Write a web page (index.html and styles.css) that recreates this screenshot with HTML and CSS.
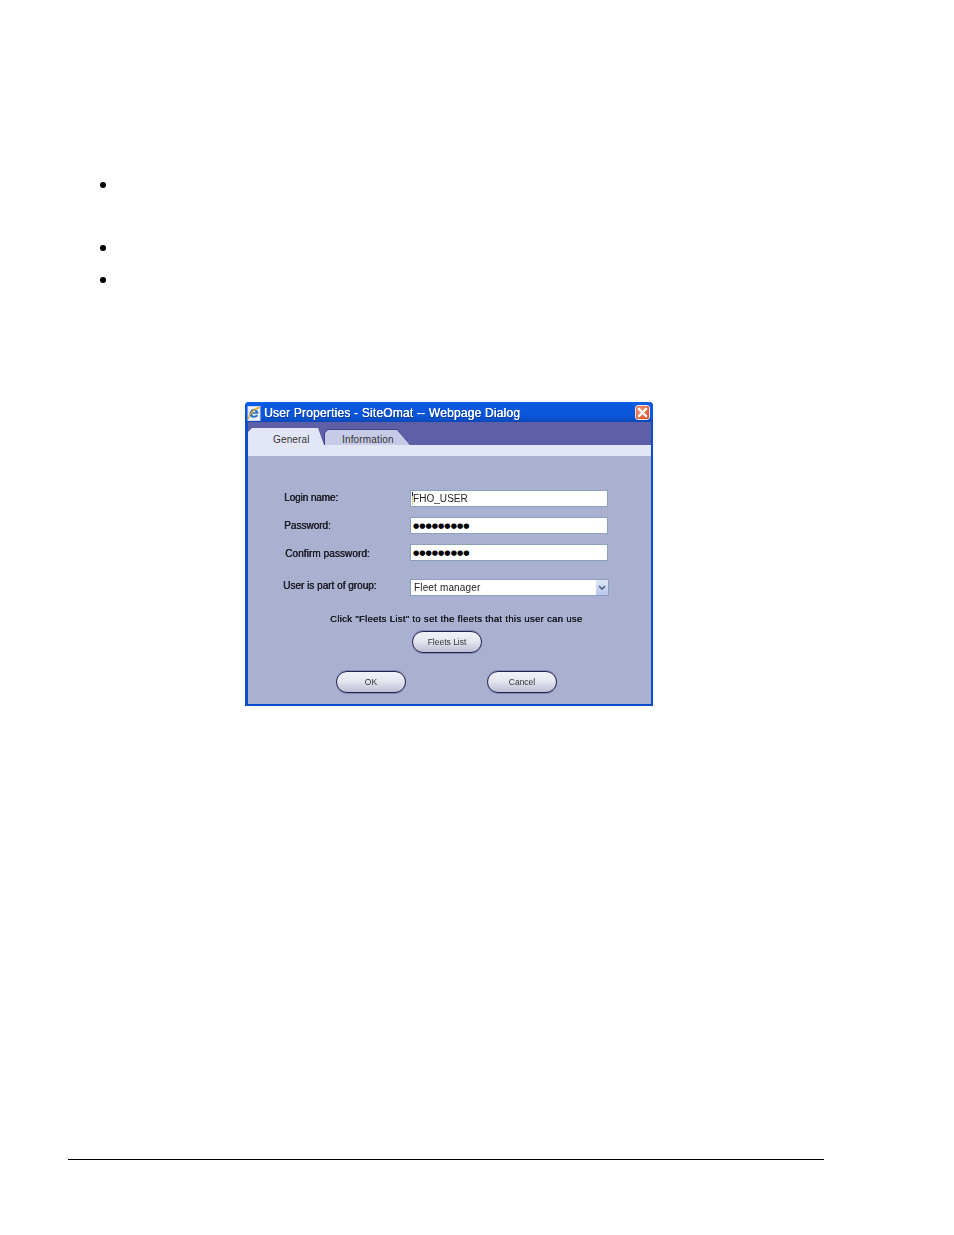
FILE: index.html
```html
<!DOCTYPE html>
<html lang="en">
<head>
<meta charset="utf-8">
<title>User Properties - SiteOmat</title>
<link rel="stylesheet" href="styles.css">
</head>
<body>
<div class="page">
  <ul class="bullets">
    <li class="b1"></li>
    <li class="b2"></li>
    <li class="b3"></li>
  </ul>
  <div class="dialog">
    <div class="titlebar">
      <svg class="ie" width="14" height="15" viewBox="0 0 14 15">
        <rect x="1" y="0.500" width="12" height="14" fill="#eef2fa" stroke="#cfd8ea"/>
        <path d="M2.500 8.500c0-3.500 2.300-5.400 4.600-5.400 2.600 0 4.200 1.900 4.200 4.600H5c.1 2.200 3 2.800 5 .9l1 1.500c-2.900 2.600-8.500 1.900-8.500-1.600zM5.100 6.200h3.600c-.1-1.900-3.300-2-3.600 0z" fill="#2a6fc4"/>
        <path d="M1.500 13C2 8 7 2.500 12.500 1.500" fill="none" stroke="#e8a820" stroke-width="1.300"/>
      </svg>
      <span class="title">User Properties - SiteOmat -- Webpage Dialog</span>
      <span class="close">
        <svg width="11" height="11" viewBox="0 0 11 11"><path d="M2 2l7 7M9 2l-7 7" stroke="#fff" stroke-width="2.300" stroke-linecap="square"/></svg>
      </span>
    </div>
    <div class="content">
      <div class="tabstrip">
        <div class="tab tab-active">General</div>
        <div class="tab tab-idle">Information</div>
      </div>
      <div class="band"></div>
      <div class="formarea">
        <div class="fields">
          <label class="lbl l1">Login name:</label>
          <div class="input text"><i class="caret"></i>FHO_USER</div>
          <label class="lbl l2">Password:</label>
          <div class="input dots">●●●●●●●●●</div>
          <label class="lbl l3">Confirm password:</label>
          <div class="input dots">●●●●●●●●●</div>
          <label class="lbl l4">User is part of group:</label>
          <div class="input select"><span>Fleet manager</span>
            <span class="arrow"><svg width="8" height="6" viewBox="0 0 8 6"><path d="M1 1l3 3 3-3" fill="none" stroke="#4d6185" stroke-width="1.600"/></svg></span>
          </div>
        </div>
        <p class="hint">Click "Fleets List" to set the fleets that this user can use</p>
        <div class="btnrow single"><button class="btn">Fleets List</button></div>
        <div class="btnrow double"><button class="btn">OK</button><button class="btn">Cancel</button></div>
      </div>
    </div>
  </div>
  <div class="rule"></div>
</div>
</body>
</html>
```
FILE: styles.css
```css
html, body { margin: 0; padding: 0; background: #fff; }
.page { width: 954px; height: 1235px; padding-top: 182px; box-sizing: border-box; font-family: "Liberation Sans", Arial, sans-serif; overflow: hidden; }

.bullets { list-style: none; margin: 0 0 0 100px; padding: 0; height: 220px; }
.bullets li { width: 6px; height: 6px; border-radius: 50%; background: #000; }
.b1 { margin-bottom: 57px; }
.b2 { margin-bottom: 26px; }

.dialog { width: 408px; height: 304px; margin-left: 245px; box-sizing: border-box; display: flex; flex-direction: column; background: #0a4ecb; border-radius: 4px 4px 0 0; }
.titlebar { height: 20px; flex: none; display: flex; align-items: center; padding: 2px 3px 0 2px; box-sizing: border-box; background: linear-gradient(#0d5fe6, #0a58e0 20%, #0a55d8 70%, #0b49b8); border-radius: 4px 4px 0 0; }
.ie { flex: none; margin-right: 3px; }
.title { flex: 1; color: #fff; font-size: 12px; letter-spacing: 0.2px; white-space: nowrap; text-shadow: 0.4px 0 0 #fff, 1px 1px 0 #0a3a9a; filter: blur(0.25px); }
.close { flex: none; width: 15px; height: 15px; margin-top: -1px; box-sizing: border-box; display: flex; align-items: center; justify-content: center; border: 1px solid #f3e3dc; border-radius: 3px; background: radial-gradient(circle at 35% 35%, #f09a7a, #e2643c 60%, #c8471f); }

.content { flex: 1; margin: 0 2px 2px 3px; background: #aab1d0; display: flex; flex-direction: column; min-height: 0; }
.tabstrip { height: 23px; flex: none; background: #5f5fa8; display: flex; align-items: flex-end; }
.tab { font-size: 10px; letter-spacing: 0.15px; color: #333; display: flex; align-items: flex-end; box-sizing: border-box; }
.tab-active { width: 76px; height: 17px; padding: 0 0 0 25px; line-height: 10px; background: #e3e6f7; clip-path: polygon(0 4px, 4px 0, 70px 0, 76px 17px, 0 17px); position: relative; z-index: 1; }
.tab-idle { width: 86px; height: 16px; padding: 0 0 0 18px; line-height: 10px; position: relative; background: #3f3f8a; clip-path: polygon(0 4px, 4px 0, 73px 0, 86px 16px, 0 16px); isolation: isolate; }
.tab-idle::before { content: ""; position: absolute; inset: 1px 0 0 1px; z-index: -1; background: #c7cbe8; clip-path: polygon(0 3px, 3px 0, 72px 0, 85px 15px, 0 15px); }
.band { height: 11px; flex: none; background: #e3e6f7; }

.formarea { flex: 1; padding-top: 34px; display: flex; flex-direction: column; }
.fields { display: grid; grid-template-columns: 162px 198px; grid-template-rows: 17px 17px 17px 25px; row-gap: 10px; }
.lbl { font-size: 10px; color: #1a1a22; align-self: center; padding-left: 36px; white-space: nowrap; text-shadow: 0.45px 0 0 #1a1a22; filter: blur(0.25px); }
.l1 { padding-bottom: 3px; letter-spacing: -0.1px; }
.l2 { padding-bottom: 1px; }
.l3 { padding-left: 37px; padding-top: 1px; letter-spacing: 0.08px; }
.l4 { padding-left: 35px; margin-top: 8px; padding-bottom: 5px; }
.input { box-sizing: border-box; background: #fff; border: 1px solid #8aa0bd; display: flex; align-items: center; font-size: 10px; color: #222; padding-left: 1px; white-space: nowrap; }
.text { filter: blur(0.2px); letter-spacing: 0.05px; }
.caret { width: 1px; height: 13px; background: linear-gradient(#222 30%, #c9d07a 30%); flex: none; }
.dots { padding-left: 2px; font-size: 7.200px; color: #000; font-family: "DejaVu Sans", sans-serif; }
.select { justify-content: space-between; margin-top: 8px; height: 17px; width: 199px; padding: 0 0 0 3px; letter-spacing: 0.15px; }
.select > span:first-child { filter: blur(0.2px); }
.arrow { width: 12px; height: 15px; display: flex; align-items: center; justify-content: center; background: linear-gradient(#dfe6f6, #b9c8ec); }

.hint { margin: 17px 0 0; padding-left: 82px; font-size: 9.500px; color: #14141c; white-space: nowrap; letter-spacing: 0.32px; text-shadow: 0.3px 0 0 #14141c; line-height: 12px; filter: blur(0.25px); }
.btnrow { display: flex; }
.single { margin-top: 6px; padding-left: 164px; }
.double { margin-top: 18px; padding-left: 88px; gap: 81px; }
.btn { width: 70px; height: 22px; padding: 0; border: 1.500px solid #24244f; border-radius: 11px; background: linear-gradient(#f2f2f8, #e4e6f0 45%, #bcc0d2); font: 400 8.500px "Liberation Sans", Arial, sans-serif; color: #333; box-shadow: 0 -1px 0 #8488b5, 0 1px 0 #8488b5; filter: blur(0.2px); }

.rule { width: 756px; height: 1px; margin: 453px 0 0 68px; background: #000; }
```
